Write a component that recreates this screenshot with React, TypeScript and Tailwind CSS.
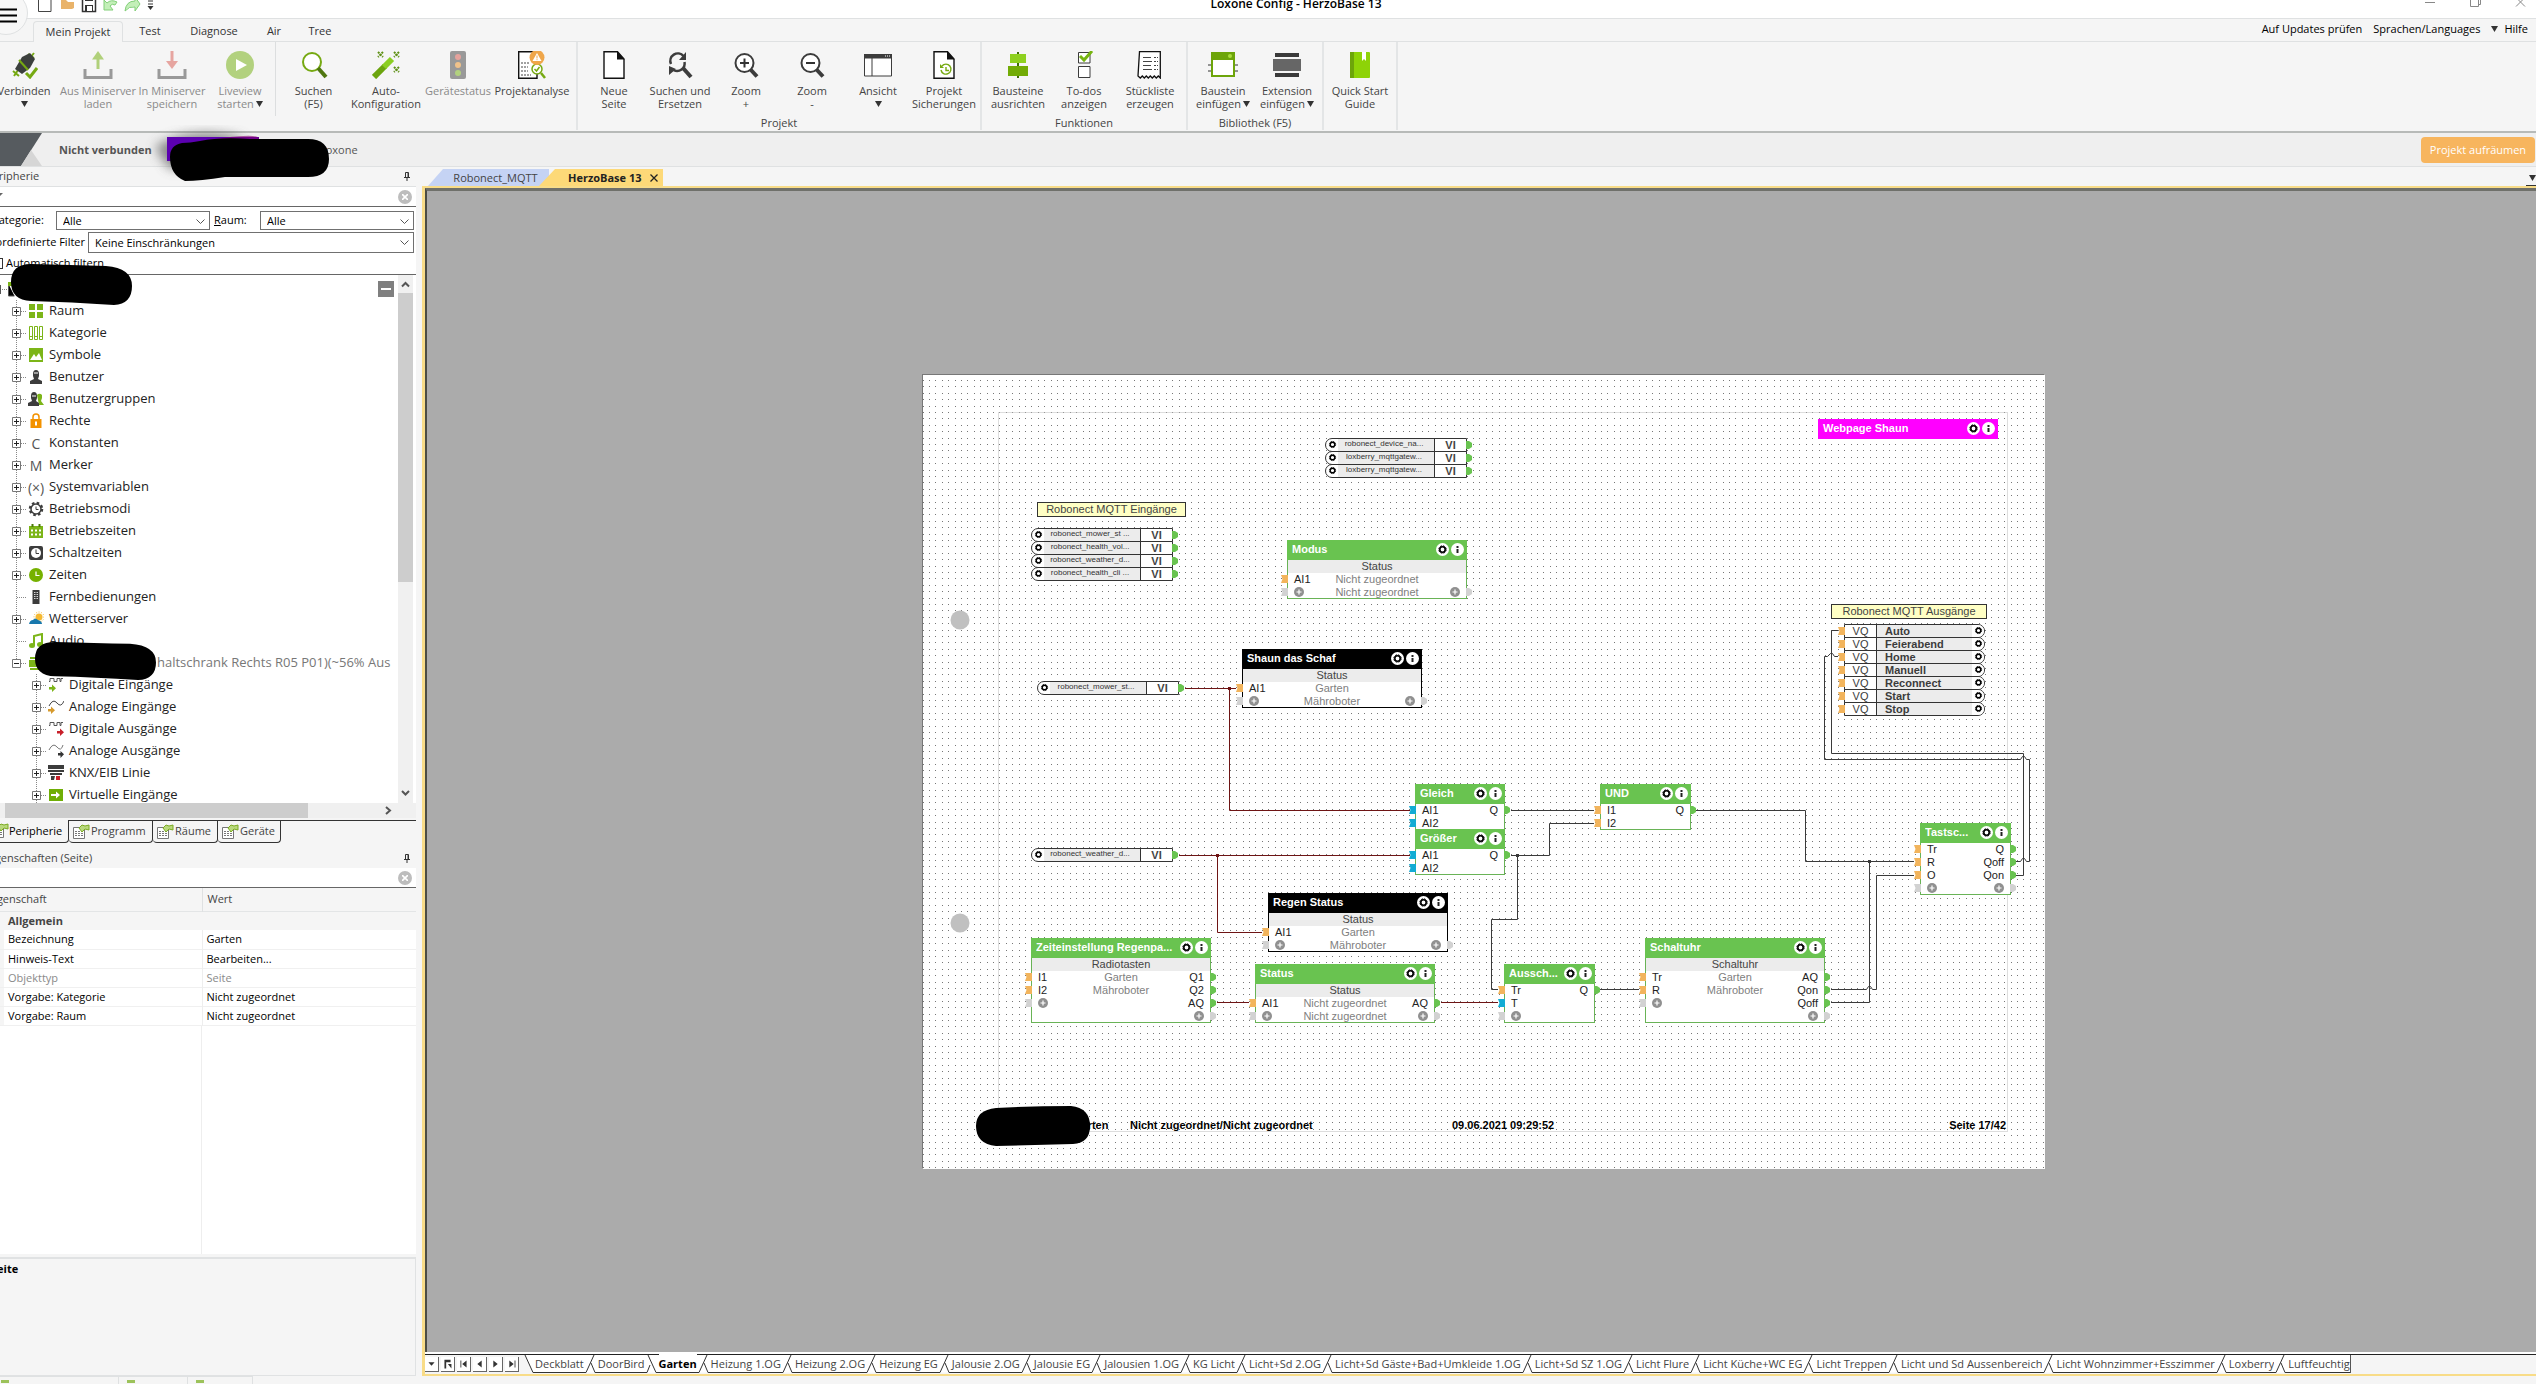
import type { ReactNode } from "react";

const GREEN = "#69c350";

/* ---------- ribbon ---------- */

type RibbonItem = { icon: ReactNode; lines: string[]; arrow?: boolean; width: string; disabled?: boolean };

const Caret = () => (
  <svg width="7" height="6" viewBox="0 0 7 6" className="inline-block shrink-0">
    <path d="M0 0H7L3.5 6Z" fill="#333" />
  </svg>
);

const DocPage = ({ children }: { children?: ReactNode }) => (
  <svg width="28" height="28" viewBox="0 0 28 28">
    <path d="M4 .7H17.500L24 8V27.300H4Z" fill="#fff" stroke="#111" strokeWidth="1.400" />
    <path d="M17 0V8.500H24.600Z" fill="#111" />
    {children}
  </svg>
);

const Lens = ({ children }: { children?: ReactNode }) => (
  <svg width="28" height="28" viewBox="0 0 28 28">
    <circle cx="12.500" cy="12" r="9" fill="#fff" stroke="#3c3c3c" strokeWidth="2" />
    <path d="M18.500 18.500L25 25.500" stroke="#3c3c3c" strokeWidth="4" />
    {children}
  </svg>
);

const icons = {
  connect: (
    <svg width="28" height="28" viewBox="0 0 28 28">
      <path d="M4 25L8 19M20 7L24 2M18 3l6 4M3 20l6 5" stroke="#76a912" strokeWidth="2" />
      <path d="M12 6l8-4 5 6-5 9-8 6-7-5z" fill="#3b3f3d" />
      <path d="M9 9l9 10" stroke="#76a912" strokeWidth="2" />
      <path d="M16 22l4 4 7-9" fill="none" stroke="#76a912" strokeWidth="3" />
    </svg>
  ),
  upload: (
    <svg width="30" height="28" viewBox="0 0 30 28">
      <path d="M2 18V26.500H28V18" fill="none" stroke="#999" strokeWidth="3" />
      <path d="M15 18V3" stroke="#b0d07a" strokeWidth="3" />
      <path d="M9 8.500L15 0L21 8.500Z" fill="#b0d07a" />
    </svg>
  ),
  download: (
    <svg width="30" height="28" viewBox="0 0 30 28">
      <path d="M2 18V26.500H28V18" fill="none" stroke="#999" strokeWidth="3" />
      <path d="M15 0V12" stroke="#e6a5a0" strokeWidth="3" />
      <path d="M9 10L15 18L21 10Z" fill="#e6a5a0" />
    </svg>
  ),
  play: (
    <svg width="28" height="28" viewBox="0 0 28 28">
      <circle cx="14" cy="14" r="14" fill="#b2d17e" />
      <path d="M10 8L21 14L10 20Z" fill="#fff" />
    </svg>
  ),
  search: (
    <svg width="28" height="28" viewBox="0 0 28 28">
      <circle cx="12" cy="11" r="9" fill="#fff" stroke="#76a912" strokeWidth="2" />
      <path d="M18 17L26 26" stroke="#4f7610" strokeWidth="4" />
    </svg>
  ),
  wand: (
    <svg width="28" height="28" viewBox="0 0 28 28">
      <path d="M2 26L13 15" stroke="#6ba40e" strokeWidth="6" />
      <path d="M12 16L20 8" stroke="#8bce22" strokeWidth="6" />
      <path d="M6 1l5 5m0-5l-5 5M22 1l5 5m0-5l-5 5M22 16l5 5m0-5l-5 5" stroke="#5d8f14" strokeWidth="2" strokeDasharray="2 1" />
    </svg>
  ),
  traffic: (
    <svg width="28" height="28" viewBox="0 0 28 28">
      <rect x="6" width="16" height="28" rx="2" fill="#999" />
      <circle cx="14" cy="6" r="3" fill="#e5a29c" />
      <circle cx="14" cy="14" r="3" fill="#f0c28a" />
      <circle cx="14" cy="22" r="3" fill="#b2d17e" />
    </svg>
  ),
  analyse: (
    <svg width="30" height="28" viewBox="0 0 30 28">
      <path d="M1.700 .7H20V27.300H1.700Z" fill="#fff" stroke="#111" strokeWidth="1.400" />
      <path d="M4 12h9M4 16h7M4 20h7M4 24h10" stroke="#444" strokeDasharray="2 1" />
      <circle cx="20" cy="18" r="5" fill="#fff" stroke="#76a912" strokeWidth="1.500" />
      <path d="M24 22l4 5" stroke="#76a912" strokeWidth="2.500" />
      <path d="M17.500 18l2 2 3-4" fill="none" stroke="#76a912" strokeWidth="1.500" />
      <circle cx="20" cy="6.500" r="7.500" fill="#efa64a" />
      <path d="M20 2l4.500 8h-9z" fill="#fff" />
      <path d="M20 4.500v3M20 8.200v1" stroke="#efa64a" />
    </svg>
  ),
  replace: (
    <svg width="28" height="28" viewBox="0 0 28 28">
      <path d="M5 13a7.500 7.500 0 0 1 12.500-8M18.500 11a7.500 7.500 0 0 1-11 8" fill="none" stroke="#3c3c3c" strokeWidth="2.500" />
      <path d="M20 1v8h-7zM3 24v-9l7 3z" fill="#3c3c3c" />
      <path d="M17 17L25 26" stroke="#3c3c3c" strokeWidth="4" />
    </svg>
  ),
  view: (
    <svg width="30" height="28" viewBox="0 0 30 28">
      <path d="M1.500 3.500H28.500V25H1.500Z" fill="#fff" stroke="#3c3c3c" />
      <path d="M1 3H29V7.500H1Z" fill="#3c3c3c" />
      <path d="M9 7V25" stroke="#3c3c3c" />
      <path d="M22 5h6" stroke="#fff" strokeDasharray="1 1" />
    </svg>
  ),
  align: (
    <svg width="28" height="28" viewBox="0 0 28 28">
      <path d="M14 1V27" stroke="#3f6a08" strokeWidth="2" />
      <rect x="6" y="3" width="16" height="9" fill="#8ed01f" />
      <rect x="4" y="15" width="20" height="10" fill="#72ab06" />
    </svg>
  ),
  todo: (
    <svg width="28" height="28" viewBox="0 0 28 28">
      <path d="M8.500 1.500H20V12H8.500ZM8.500 15.500H20V26.500H8.500Z" fill="#fff" stroke="#3c3c3c" />
      <path d="M10 5l4 4 8-9" fill="none" stroke="#76b510" strokeWidth="3" />
    </svg>
  ),
  parts: (
    <svg width="28" height="28" viewBox="0 0 28 28">
      <path d="M3.500 .7H24.300V27l-2-2-2 2-2-2-2 2-2-2-2 2-2-2-2 2-2-2-2 2-2.300-2Z" fill="#fff" stroke="#111" strokeWidth="1.300" />
      <path d="M7 6.500h8M7 10.500h9M7 14.500h8M7 18.500h9" stroke="#444" />
      <path d="M18 6.500h4M18 10.500h4M18 14.500h4M18 18.500h4" stroke="#444" strokeDasharray="2 1" />
    </svg>
  ),
  block: (
    <svg width="30" height="28" viewBox="0 0 30 28">
      <path d="M0 14h30M0 20h30" stroke="#333" />
      <rect x="3" y="1" width="24" height="25" fill="#6da50a" />
      <rect x="5" y="9" width="20" height="15" fill="#fff" />
      <circle cx="22" cy="5" r="2" fill="#a9dd3c" />
    </svg>
  ),
  extension: (
    <svg width="30" height="28" viewBox="0 0 30 28">
      <rect x="3" y="2" width="24" height="4" fill="#3a3a3a" />
      <rect x="1" y="8" width="28" height="12" fill="#666" />
      <rect x="3" y="22" width="24" height="4" fill="#3a3a3a" />
    </svg>
  ),
  guide: (
    <svg width="28" height="28" viewBox="0 0 28 28">
      <rect x="4" y="1" width="20" height="26" rx="1" fill="#8ed307" />
      <rect x="4" y="1" width="4" height="26" fill="#6da50a" />
      <path d="M16 1h4v9l-2-2-2 2z" fill="#fff" />
    </svg>
  ),
};

const groups: { label?: string; items: RibbonItem[]; className: string }[] = [
  {
    className: "-ml-[13px] pr-[7px]",
    items: [
      { icon: icons.connect, lines: ["Verbinden"], arrow: true, width: "w-[74px]" },
      { icon: icons.upload, lines: ["Aus Miniserver", "laden"], width: "w-[74px]", disabled: true },
      { icon: icons.download, lines: ["In Miniserver", "speichern"], width: "w-[74px]", disabled: true },
      { icon: icons.play, lines: ["Liveview", "starten"], arrow: true, width: "w-[62px]", disabled: true },
      { icon: icons.search, lines: ["Suchen", "(F5)"], width: "ml-1 w-[76px] border-l border-[#dcdedf]" },
      { icon: icons.wand, lines: ["Auto-", "Konfiguration"], width: "w-[70px]" },
      { icon: icons.traffic, lines: ["Gerätestatus"], width: "w-[74px]", disabled: true },
      { icon: icons.analyse, lines: ["Projektanalyse"], width: "w-[74px]" },
    ],
  },
  {
    label: "Projekt",
    className: "px-[3px]",
    items: [
      { icon: <DocPage />, lines: ["Neue", "Seite"], width: "w-[66px]" },
      { icon: icons.replace, lines: ["Suchen und", "Ersetzen"], width: "w-[66px]" },
      { icon: <Lens><path d="M8 12h9M12.500 7.500v9" stroke="#333" strokeWidth="2" /></Lens>, lines: ["Zoom", "+"], width: "w-[66px]" },
      { icon: <Lens><path d="M8 12h9" stroke="#333" strokeWidth="2" /></Lens>, lines: ["Zoom", "-"], width: "w-[66px]" },
      { icon: icons.view, lines: ["Ansicht"], arrow: true, width: "w-[66px]" },
      {
        icon: (
          <DocPage>
            <path d="M11 19a5 5 0 1 0 1-4M16 16v3.500h3" fill="none" stroke="#76a912" strokeWidth="1.400" />
            <path d="M10 13v4h4z" fill="#76a912" />
          </DocPage>
        ),
        lines: ["Projekt", "Sicherungen"],
        width: "w-[66px]",
      },
    ],
  },
  {
    label: "Funktionen",
    className: "px-[3px]",
    items: [
      { icon: icons.align, lines: ["Bausteine", "ausrichten"], width: "w-[66px]" },
      { icon: icons.todo, lines: ["To-dos", "anzeigen"], width: "w-[66px]" },
      { icon: icons.parts, lines: ["Stückliste", "erzeugen"], width: "w-[66px]" },
    ],
  },
  {
    label: "Bibliothek (F5)",
    className: "px-[3px]",
    items: [
      { icon: icons.block, lines: ["Baustein", "einfügen"], arrow: true, width: "w-[64px]" },
      { icon: icons.extension, lines: ["Extension", "einfügen"], arrow: true, width: "w-[64px]" },
    ],
  },
  {
    className: "px-[3px]",
    items: [{ icon: icons.guide, lines: ["Quick Start", "Guide"], width: "w-[66px]" }],
  },
];

function RibbonButton({ icon, lines, arrow, width, disabled }: RibbonItem) {
  const inlineArrow = arrow && lines.length === 2;
  return (
    <button type="button" disabled={disabled} className={`${width} flex shrink-0 flex-col items-center whitespace-nowrap pt-[9px] leading-[13px] ${disabled ? "text-[#8a8a8a]" : "text-[#444]"}`}>
      <span className="mb-[5px] flex h-[28px] items-center">{icon}</span>
      <span>{lines[0]}</span>
      {lines[1] && (
        <span className="flex items-center gap-[2px]">
          {lines[1]}
          {inlineArrow && <Caret />}
        </span>
      )}
      {arrow && !inlineArrow && <span className="flex h-[13px] items-center"><Caret /></span>}
    </button>
  );
}

function Ribbon() {
  return (
    <div className="flex h-[91px] shrink-0 overflow-hidden border-b-2 border-[#b7bab8] pb-px text-[11px]">
      {groups.map((g, i) => (
        <section key={i} className={`flex shrink-0 flex-col border-r-2 border-[#e3e5e6] ${g.className}`}>
          <div className="flex h-[74px]">{g.items.map((it) => <RibbonButton key={it.lines.join()} {...it} />)}</div>
          {g.label && <div className="text-center leading-[14px] text-[#444]">{g.label}</div>}
        </section>
      ))}
    </div>
  );
}

/* ---------- window head ---------- */

function TitleBar() {
  return (
    <div className="h-[19px] shrink-0 overflow-hidden border-b border-[#dfe1e2] bg-white">
      <div className="-mt-[10px] flex h-[28px] items-center justify-between">
        <svg width="160" height="28" viewBox="0 0 160 28" className="shrink-0">
          <path d="M38.500 5H47L51 9V21.500H38.500Z" fill="#fff" stroke="#444" />
          <path d="M61 10h5l2 2h6v6l-2 1H61z" fill="#e9b36a" />
          <path d="M82.500 6.500h12l1 1v14h-13z" fill="#fff" stroke="#333" strokeWidth="1.500" />
          <path d="M85 6h8v5h-8zM85 15h8v6h-8z" fill="#333" />
          <path d="M87 16h5v5h-5z" fill="#fff" />
          <path d="M104 20V10l3 3q4-4 10-1l-2 3q-3-2-5 1l3 4z" fill="#c3efb8" stroke="#82cf78" />
          <path d="M140 14l-5-7v4q-9 0-10 10 4-5 10-4v4z" fill="#c3efb8" stroke="#82cf78" />
          <path d="M148 11h5M148 14h5" stroke="#333" />
          <path d="M147.500 16h6L150.500 20z" fill="#333" />
        </svg>
        <h1 className="ml-[12px] text-[12px] font-semibold text-black">Loxone Config - HerzoBase 13</h1>
        <div className="flex w-[116px] shrink-0 items-center">
          <svg width="116" height="28" viewBox="0 0 116 28" fill="none" stroke="#888">
            <path d="M5 12.500h10M50.500 16.500v-9h8v9zM58 14.500h2.500v-8M96 7.500l9 9m0-9l-9 9" />
          </svg>
        </div>
      </div>
    </div>
  );
}

function MenuBar() {
  return (
    <nav className="flex h-[23px] shrink-0 items-end justify-between border-b border-[#dfe1e2] text-[11px] text-[#333]">
      <div className="relative z-10 -mb-px flex h-[21px] pl-[33px]">
        <button type="button" className="w-[90px] rounded-t-sm border border-b-0 border-[#dfe1e2] bg-[#f5f5f5]">Mein Projekt</button>
        <button type="button" className="w-[54px]">Test</button>
        <button type="button" className="w-[74px]">Diagnose</button>
        <button type="button" className="w-[46px]">Air</button>
        <button type="button" className="w-[46px]">Tree</button>
      </div>
      <div className="flex h-full items-center gap-[11px] pb-[2px] pr-2 text-black">
        <button type="button">Auf Updates prüfen</button>
        <button type="button">Sprachen/Languages</button>
        <button type="button" className="flex items-center gap-[6px]"><Caret />Hilfe</button>
      </div>
    </nav>
  );
}

function StatusBar() {
  return (
    <div className="relative z-10 flex h-[34px] shrink-0 items-center justify-between border-b border-[#dfe1e2] bg-[#efefef] pr-px">
      <div className="flex h-full items-center text-[#555]">
        <svg width="42" height="33" viewBox="0 0 42 33" className="shrink-0">
          <path d="M0 0H42L21 33H0Z" fill="#565b5f" />
          <path d="M31 17L42 33H21Z" fill="#d6d6d6" />
        </svg>
        <span className="ml-[17px] w-[106px] pt-[2px] text-[11px] font-bold">Nicht verbunden</span>
        <span className="w-[155px] text-[12px]">|</span>
        <span className="pt-[2px] text-[11px]">Loxone</span>
      </div>
      <svg width="210" height="64" viewBox="0 0 210 64" className="absolute left-[130px] top-[-8px]">
        <defs>
          <filter id="spray" x="-30%" y="-60%" width="160%" height="220%">
            <feGaussianBlur stdDeviation="6" />
          </filter>
        </defs>
        <path d="M25 22Q60 0 115 14L70 40L40 44Z" fill="#555" opacity=".7" filter="url(#spray)" />
        <path d="M37 12H129V36H37Z" fill="#5b00b0" />
        <path d="M60 18Q130 6 129 14V30H60Z" fill="#800070" opacity=".6" />
        <path d="M52 18Q60 18 70 16Q90 12 120 14H178Q199 14 199 34Q199 52 178 52H95Q70 56 55 56Q40 50 40 32Q40 20 52 18Z" fill="#000" />
      </svg>
      <button type="button" className="mt-px h-[26px] w-[114px] rounded-[4px] bg-[#f7b55e] text-[11px] text-white">Projekt aufräumen</button>
    </div>
  );
}

/* ---------- periphery tree ---------- */

const G = "#7cb518";
const treeIcon: Record<string, ReactNode> = {
  raum: <path d="M1 1h6v6H1zM9 1h6v6H9zM1 9h6v6H1zM9 9h6v6H9z" fill={G} />,
  kategorie: <path d="M1.500 1.500h3v13h-3zM6.500 1.500h3v13h-3zM11.500 1.500h3v13h-3zM2 11.500h2M7 11.500h2M12 11.500h2" fill="none" stroke={G} />,
  symbole: <><path d="M1 1h14v14H1z" fill={G} /><path d="M2 13l4-6 2 3 3-4 3 7z" fill="#fff" /></>,
  benutzer: <><path d="M5 5a3 4 0 0 1 6 0v2l-1 3 4 2v3H2v-3l4-2-1-3z" fill="#3c3c3c" /><path d="M6 4h4" stroke="#fff" /></>,
  gruppen: <><path d="M9 4a3 3 0 0 1 5 0v3l-1 3 3 4h-5z" fill={G} /><path d="M3 5a3 4 0 0 1 6 0v2l-1 3 3 2v3H0v-3l4-2-1-3z" fill="#3c3c3c" /><path d="M4 5h4" stroke="#fff" /></>,
  rechte: <><path d="M5 6V4a3 3 0 0 1 6 0v2" fill="none" stroke="#f39200" strokeWidth="1.500" /><path d="M2.500 6h11v9h-11z" fill="#f39200" /><path d="M8 8.500v4" stroke="#fff" strokeWidth="2" /></>,
  betriebsmodi: <><circle cx="8" cy="8" r="6" fill="#fff" stroke="#3c3c3c" strokeWidth="2.500" strokeDasharray="2.500 2.200" /><circle cx="8" cy="8" r="5" fill="#fff" stroke="#3c3c3c" strokeWidth="1.500" /><path d="M8 5.500V8.500h2.500" fill="none" stroke="#3c3c3c" /></>,
  betriebszeiten: <><path d="M1 3h14v12H1z" fill={G} /><path d="M4.500 1v3M11.500 1v3" stroke="#4b7a07" strokeWidth="2" /><path d="M3 7.500h10M3 11.500h10" stroke="#fff" strokeWidth="2" strokeDasharray="2 2" /></>,
  schaltzeiten: <><rect x="1" y="1" width="14" height="14" rx="2" fill="#3c3c3c" /><circle cx="8" cy="8" r="5" fill="#fff" /><path d="M8 4.500V8.500h3" fill="none" stroke="#3c3c3c" /></>,
  zeiten: <><circle cx="8" cy="8" r="7" fill="#76b100" /><path d="M8 4.500V8.500h3.500" fill="none" stroke="#fff" strokeWidth="1.200" /></>,
  fern: <><path d="M4.500 1h7v14h-7z" fill="#3c3c3c" /><path d="M6.500 3v8M8 3v8M9.500 3v8" stroke="#fff" strokeDasharray="1 1" strokeWidth=".8" /></>,
  wetter: <><circle cx="11" cy="6" r="3.500" fill="#f5b932" /><circle cx="11" cy="6" r="5" fill="none" stroke="#f5b932" strokeDasharray="1 1.500" /><path d="M1 13q1-4 4-4 2-3 5 0 4 1 4 4z" fill="#1878ad" /></>,
  audio: <><path d="M6 12V3l8-2v10" fill="none" stroke={G} strokeWidth="2" /><ellipse cx="4" cy="12.500" rx="3" ry="2.500" fill={G} /><ellipse cx="12" cy="11.500" rx="3" ry="2.500" fill={G} /></>,
  server: <path d="M2 2h13v2H2zM1 5h15v7H1zM2 13h13v2H2z" fill={G} />,
  digIn: <><path d="M1 4.500h1v-3h4v3h3v-3h3v3h1v-3h2" fill="none" stroke="#555" /><path d="M1 10h3V7.500l4 3.800-4 3.700v-2.500H1z" fill={G} /></>,
  anaIn: <><path d="M1 7q4-8 8-3t7-2" fill="none" stroke="#444" /><path d="M0 10h3V7.500l4 3.800-4 3.700v-2.500H0z" fill="#d69a2d" /></>,
  digOut: <><path d="M1 4.500h1v-3h4v3h3v-3h3v3h1v-3h2" fill="none" stroke="#555" /><path d="M9 10h3V7.500l4 3.800-4 3.700v-2.500H9z" fill="#c8202a" /></>,
  anaOut: <><path d="M1 7q4-8 8-3t6-2" fill="none" stroke="#777" /><path d="M10 10h2.500V8l3.500 3.300-3.500 3.700v-2.500H10z" fill="#333" /></>,
  knx: <><path d="M0 0h16v4H0zM0 5h16v2H0zM2 8h12v2H2z" fill="#3c3c3c" /><path d="M3 11h4l-1 4H3z" fill="#3c3c3c" /><path d="M8 11h4v4H8z" fill="#c8202a" /></>,
  virtIn: <><path d="M1 2h14v12H1z" fill="#6fae06" /><path d="M3 7h5V4.500L12 8l-4 3.500V9H3z" fill="#fff" /></>,
};

type Node = { label: string; icon: string; leaf?: boolean; child?: boolean };
const treeNodes: Node[] = [
  { label: "Raum", icon: "raum" },
  { label: "Kategorie", icon: "kategorie" },
  { label: "Symbole", icon: "symbole" },
  { label: "Benutzer", icon: "benutzer" },
  { label: "Benutzergruppen", icon: "gruppen" },
  { label: "Rechte", icon: "rechte" },
  { label: "Konstanten", icon: "C" },
  { label: "Merker", icon: "M" },
  { label: "Systemvariablen", icon: "(×)" },
  { label: "Betriebsmodi", icon: "betriebsmodi" },
  { label: "Betriebszeiten", icon: "betriebszeiten" },
  { label: "Schaltzeiten", icon: "schaltzeiten" },
  { label: "Zeiten", icon: "zeiten" },
  { label: "Fernbedienungen", icon: "fern", leaf: true },
  { label: "Wetterserver", icon: "wetter" },
  { label: "Audio", icon: "audio", leaf: true },
  { label: "haltschrank Rechts R05 P01)(~56% Aus", icon: "server" },
  { label: "Digitale Eingänge", icon: "digIn", child: true },
  { label: "Analoge Eingänge", icon: "anaIn", child: true },
  { label: "Digitale Ausgänge", icon: "digOut", child: true },
  { label: "Analoge Ausgänge", icon: "anaOut", child: true },
  { label: "KNX/EIB Linie", icon: "knx", child: true },
  { label: "Virtuelle Eingänge", icon: "virtIn", child: true },
];

function TreeRow({ node }: { node: Node }) {
  const open = node.icon === "server";
  return (
    <li className={`flex h-[22px] items-center whitespace-nowrap ${node.child ? "pl-[38px]" : "pl-[18px]"}`}>
      <svg width="18" height="22" viewBox="0 0 18 22" className="shrink-0">
        <path d={open ? "M6.500 0V11" : "M6.500 0V22"} stroke="#888" strokeDasharray="1 1" />
        <path d="M7 11.500H17" stroke="#888" strokeDasharray="1 1" />
        {!node.leaf && (
          <>
            <path d="M2.500 7.500h8v8h-8z" fill="#fff" stroke="#777" />
            <path d={open ? "M4 11.500h5" : "M4 11.500h5M6.500 9v5"} stroke="#222" />
          </>
        )}
      </svg>
      {treeIcon[node.icon] ? (
        <svg width="16" height="16" viewBox="0 0 16 16" className="shrink-0">{treeIcon[node.icon]}</svg>
      ) : (
        <span className="flex w-4 shrink-0 justify-center text-[14px] text-[#555]">{node.icon}</span>
      )}
      <span className={open ? "pl-[113px] text-[#777]" : "pl-[5px]"}>{node.label}</span>
    </li>
  );
}

const Blob = ({ className }: { className: string }) => (
  <svg viewBox="0 0 122 41" className={className} preserveAspectRatio="none">
    <path d="M20 0Q60 1 95 2Q121 4 121 22Q121 40 103 41Q60 38 20 37Q0 36 0 18Q0 0 20 0Z" fill="#000" />
  </svg>
);

const Pin = () => (
  <svg width="8" height="9" viewBox="0 0 8 9" className="mr-[5px]" fill="none" stroke="#333">
    <path d="M2.500 5V.5h3V5M5 1v4M1 5.500h6M4 6v3" />
  </svg>
);

const ClearButton = () => (
  <button type="button" aria-label="Filter löschen" className="mr-1 flex h-[14px] w-[14px] shrink-0 items-center justify-center rounded-full bg-[#bdbdbd]">
    <svg width="6" height="6" viewBox="0 0 6 6"><path d="M0 0L6 6M6 0L0 6" stroke="#fff" strokeWidth="1.600" /></svg>
  </button>
);

function Combo({ id, value, className }: { id: string; value: string; className: string }) {
  return (
    <div className={`relative ${className}`}>
      <select id={id} className="h-full w-full appearance-none border border-[#707070] bg-white pl-[6px] text-[11px] leading-[16px]">
        <option>{value}</option>
      </select>
      <svg width="9" height="6" viewBox="0 0 9 6" className="pointer-events-none absolute right-[5px] top-[8px]"><path d="M.5 .5L4.500 4.500L8.500 .5" fill="none" stroke="#555" /></svg>
    </div>
  );
}

const TabIcon = () => (
  <svg width="17" height="16" viewBox="0 0 17 16" className="shrink-0">
    <path d="M.5 3.500h11v11H.5z" fill="#fff" stroke="#777" />
    <path d="M2 7.500h8M2 9.500h8M2 11.500h8" stroke="#777" strokeDasharray="2 1" />
    <path d="M6 4l3-3 3 1 4-1v5l-4-1-3 3z" fill="#b9d97c" stroke="#7cab22" />
  </svg>
);

const props = [
  ["Bezeichnung", "Garten"],
  ["Hinweis-Text", "Bearbeiten..."],
  ["Objekttyp", "Seite"],
  ["Vorgabe: Kategorie", "Nicht zugeordnet"],
  ["Vorgabe: Raum", "Nicht zugeordnet"],
];

function Sidebar() {
  return (
    <aside className="-ml-2 flex w-[430px] shrink-0 flex-col pr-[6px] text-[11px]">
      <div className="flex h-[20px] shrink-0 items-center justify-between border-b border-[#dfe1e2] text-[#444]">
        <h2 className="-ml-[6px]">Peripherie</h2>
        <Pin />
      </div>
      <div className="flex h-[20px] shrink-0 items-center border-b border-[#666] bg-white">
        <svg width="12" height="10" viewBox="0 0 12 10"><path d="M1 1h10L7 5v5H5V5z" fill="#666" /></svg>
        <input aria-label="Filter" className="min-w-0 flex-1 bg-white outline-none" />
        <ClearButton />
      </div>
      <div className="flex flex-col bg-white pt-1">
        <div className="flex h-[19px] items-center pr-[2px]">
          <label htmlFor="kat" className="w-[64px]">Kategorie:</label>
          <Combo id="kat" value="Alle" className="h-[19px] flex-1" />
          <label htmlFor="raum" className="w-[50px] pl-1"><u>R</u>aum:</label>
          <Combo id="raum" value="Alle" className="h-[19px] flex-1" />
        </div>
        <div className="mt-[2px] flex h-[21px] items-center pr-[2px]">
          <label htmlFor="vor" className="flex w-[96px] justify-end whitespace-nowrap pr-[3px]">Vordefinierte Filter</label>
          <Combo id="vor" value="Keine Einschränkungen" className="h-[21px] flex-1" />
        </div>
        <label className="flex h-[22px] items-center gap-[3px] border-b border-[#666]">
          <input type="checkbox" defaultChecked className="h-[11px] w-[11px] appearance-none border border-[#333]" />
          Automatisch filtern
        </label>
      </div>
      <div className="relative flex h-[528px] shrink-0 bg-white">
        <ul className="h-full min-w-0 flex-1 overflow-hidden pt-[3px] text-[13px] text-[#222]">
          <li className="flex h-[22px] items-center justify-between pr-1">
            <svg width="30" height="22" viewBox="0 0 30 22"><path d="M8 11.500h8" stroke="#888" strokeDasharray="1 1" /><path d="M8.500 7v9M16.500 6v12h6" stroke="#555" /><path d="M16 4h6v4h-6z" fill={G} /></svg>
            <button type="button" aria-label="Zuklappen" className="flex h-4 w-4 items-center justify-center bg-[#7f7f7f]"><span className="h-[2px] w-[10px] bg-white" /></button>
          </li>
          {treeNodes.map((n) => <TreeRow key={n.label} node={n} />)}
        </ul>
        <div className="mr-[3px] flex w-[15px] flex-col items-center bg-[#f0f0f0]">
          <svg width="15" height="18" viewBox="0 0 15 18"><path d="M4 11.500L7.500 8L11 11.500" fill="none" stroke="#555" strokeWidth="2" /></svg>
          <div className="h-[289px] w-full bg-[#cdcdcd]" />
          <svg width="15" height="18" viewBox="0 0 15 18" className="mt-auto"><path d="M4 6L7.500 9.500L11 6" fill="none" stroke="#555" strokeWidth="2" /></svg>
        </div>
        <Blob className="absolute left-[19px] top-[-11px] h-[41px] w-[122px]" />
        <Blob className="absolute left-[43px] top-[367px] h-[38px] w-[122px]" />
      </div>
      <div className="flex h-[15px] shrink-0 items-center justify-between bg-[#f0f0f0] pl-[13px] pr-[24px]">
        <div className="h-full w-[303px] bg-[#cdcdcd]" />
        <svg width="8" height="9" viewBox="0 0 8 9"><path d="M2 1L6 4.500L2 8" fill="none" stroke="#555" strokeWidth="2" /></svg>
      </div>
      <div className="mt-[2px] flex h-[23px] shrink-0 border-t border-[#333] text-[#444]">
        <button type="button" className="-mt-px flex w-[77px] items-center rounded-b-[4px] border-b border-r border-[#333] bg-[#f5f5f5] text-black"><TabIcon />Peripherie</button>
        <button type="button" className="flex w-[84px] items-center gap-px rounded-b-[4px] border-b border-r border-[#333] pl-1"><TabIcon />Programm</button>
        <button type="button" className="flex w-[65px] items-center gap-px rounded-b-[4px] border-b border-r border-[#333] pl-1"><TabIcon />Räume</button>
        <button type="button" className="flex w-[63px] items-center gap-px rounded-b-[4px] border-b border-r border-[#333] pl-1"><TabIcon />Geräte</button>
      </div>
      <div className="mt-[5px] flex h-[20px] shrink-0 items-center justify-between text-[#444]">
        <h2 className="-ml-[6px]">Eigenschaften (Seite)</h2>
        <Pin />
      </div>
      <div className="flex h-[20px] shrink-0 items-center border-b border-[#666] bg-white">
        <input aria-label="Eigenschaften filtern" className="min-w-0 flex-1 bg-white outline-none" />
        <ClearButton />
      </div>
      <div className="flex min-h-0 flex-1 flex-col bg-white">
        <table className="w-full table-fixed border-collapse text-left leading-[18px] text-black">
          <thead>
            <tr className="h-[23px] border-b border-[#e3e5e6] bg-[#f5f5f5] text-[#444]">
              <th className="w-[12px] p-0" />
              <th className="w-[198px] border-r border-[#dfe1e2] p-0 font-normal"><span className="-ml-[16px]">Eigenschaft</span></th>
              <th className="p-0 pl-[5px] font-normal">Wert</th>
            </tr>
          </thead>
          <tbody>
            <tr className="h-[19px] bg-[#f5f5f5]"><td /><td colSpan={2} className="p-0 pl-1 text-[#444]"><b>Allgemein</b></td></tr>
            {props.map(([name, value]) => (
              <tr key={name} className={`h-[19px] border-b border-[#f0f0f0] ${name === "Objekttyp" ? "text-[#8a8a8a]" : ""}`}>
                <td className="bg-[#f5f5f5] p-0" />
                <td className="border-r border-[#eee] p-0 pl-1">{name}</td>
                <td className="p-0 pl-1">{value}</td>
              </tr>
            ))}
          </tbody>
        </table>
        <div className="w-[210px] flex-1 border-r border-[#eee]" />
      </div>
      <div className="mt-[3px] h-[119px] shrink-0 border-b border-r border-t-2 border-[#e0e2e3] font-bold leading-[20px]">
        <span className="-ml-px">Seite</span>
      </div>
    </aside>
  );
}

/* ---------- page canvas ---------- */

const Gear = ({ size = 13, light = true }: { size?: number; light?: boolean }) => (
  <svg width={size} height={size} viewBox="0 0 13 13" className="shrink-0">
    {light && <circle cx="6.500" cy="6.500" r="6.500" fill="#fff" />}
    <circle cx="6.500" cy="6.500" r="2.700" fill="#fff" stroke="#000" strokeWidth="1.600" />
    <circle cx="6.500" cy="6.500" r="3.700" fill="none" stroke="#000" strokeWidth="1" strokeDasharray="1.900 1" />
  </svg>
);

const Info = () => (
  <svg width="13" height="13" viewBox="0 0 13 13" className="shrink-0">
    <circle cx="6.500" cy="6.500" r="6.500" fill="#fff" />
    <path d="M6.500 3v2M6.500 6v4" stroke="#222" strokeWidth="2" />
  </svg>
);

const Plus = () => (
  <svg width="10" height="10" viewBox="0 0 10 10" className="shrink-0">
    <circle cx="5" cy="5" r="5" fill="#909090" />
    <path d="M2.500 5h5M5 2.500v5" stroke="#fff" strokeWidth="1.200" />
  </svg>
);

const InPin = ({ color }: { color: string }) => (
  <svg width="7" height="8" viewBox="0 0 7 8" className="absolute -left-[7px] top-[2px]"><path d="M0 0H7V8H0L1.500 4Z" fill={color} /></svg>
);

const OutPin = ({ color }: { color: string }) => (
  <svg width="6" height="8" viewBox="0 0 6 8" className="absolute -right-[6px] top-[2px]"><path d="M0 0H3L6 2V6L3 8H0Z" fill={color} /></svg>
);

const ORANGE = "#f2b45c";
const CYAN = "#12acd4";
const GREY = "#d2d2d2";

// i = input label, m = text in the middle, o = output label, c = colour of the input pin
type Row = { i?: string; m?: string; o?: string; c?: string };
type BlockData = { x: number; y: number; w?: number; title: string; kind?: string; tone?: "green" | "black"; rows: Row[] };

const blocks: BlockData[] = [
  { x: 364, y: 165, title: "Modus", kind: "Status", rows: [{ i: "AI1", m: "Nicht zugeordnet" }, { i: "+", m: "Nicht zugeordnet", o: "+" }] },
  { x: 319, y: 274, title: "Shaun das Schaf", kind: "Status", tone: "black", rows: [{ i: "AI1", m: "Garten" }, { i: "+", m: "Mähroboter", o: "+" }] },
  { x: 492, y: 409, w: 90, title: "Gleich", rows: [{ i: "AI1", o: "Q", c: CYAN }, { i: "AI2", c: CYAN }] },
  { x: 492, y: 454, w: 90, title: "Größer", rows: [{ i: "AI1", o: "Q", c: CYAN }, { i: "AI2", c: CYAN }] },
  { x: 677, y: 409, w: 91, title: "UND", rows: [{ i: "I1", o: "Q" }, { i: "I2" }] },
  { x: 997, y: 448, w: 91, title: "Tastsc...", rows: [{ i: "Tr", o: "Q" }, { i: "R", o: "Qoff" }, { i: "O", o: "Qon" }, { i: "+", o: "+" }] },
  { x: 345, y: 518, title: "Regen Status", kind: "Status", tone: "black", rows: [{ i: "AI1", m: "Garten" }, { i: "+", m: "Mähroboter", o: "+" }] },
  { x: 108, y: 563, title: "Zeiteinstellung Regenpa...", kind: "Radiotasten", rows: [{ i: "I1", m: "Garten", o: "Q1" }, { i: "I2", m: "Mähroboter", o: "Q2" }, { i: "+", o: "AQ" }, { o: "+" }] },
  { x: 332, y: 589, title: "Status", kind: "Status", rows: [{ i: "AI1", m: "Nicht zugeordnet", o: "AQ" }, { i: "+", m: "Nicht zugeordnet", o: "+" }] },
  { x: 581, y: 589, w: 91, title: "Aussch...", rows: [{ i: "Tr", o: "Q" }, { i: "T", c: CYAN }, { i: "+" }] },
  { x: 722, y: 563, title: "Schaltuhr", kind: "Schaltuhr", rows: [{ i: "Tr", m: "Garten", o: "AQ" }, { i: "R", m: "Mähroboter", o: "Qon" }, { i: "+", o: "Qoff" }, { o: "+" }] },
];

function Block({ x, y, w = 180, title, kind, tone = "green", rows }: BlockData) {
  const black = tone === "black";
  return (
    <article style={{ left: x, top: y, width: w }} className={`absolute border border-t-0 bg-white text-[11px] leading-[13px] ${black ? "border-black" : "border-[#69b356]"}`}>
      <header className={`-mx-px flex h-[20px] items-center gap-[2px] pl-[5px] pr-[3px] font-bold text-white ${black ? "bg-black" : "bg-[#69c350]"}`}>
        <span className="min-w-0 flex-1 overflow-hidden whitespace-nowrap">{title}</span>
        <Gear />
        <Info />
      </header>
      {kind && <div className="bg-[#ececec] text-center text-[#444]">{kind}</div>}
      <div className="-mb-px">
        {rows.map((r, n) => (
          <div key={n} className="relative grid h-[13px] grid-cols-[1fr_auto_1fr] items-center px-[6px] text-[#222]">
            {r.i && <InPin color={r.i === "+" ? GREY : r.c ?? ORANGE} />}
            <span>{r.i === "+" ? <Plus /> : r.i}</span>
            <span className="text-[#808080]">{r.m}</span>
            <span className="flex justify-end">{r.o === "+" ? <Plus /> : r.o}</span>
            {r.o && <OutPin color={r.o === "+" ? GREY : GREEN} />}
          </div>
        ))}
      </div>
    </article>
  );
}

const inputs = [
  { x: 402, y: 63, names: ["robonect_device_na...", "loxberry_mqttgatew...", "loxberry_mqttgatew..."] },
  { x: 108, y: 153, names: ["robonect_mower_st ...", "robonect_health_vol...", "robonect_weather_d...", "robonect_health_cli ..."] },
  { x: 114, y: 306, names: ["robonect_mower_st..."] },
  { x: 108, y: 473, names: ["robonect_weather_d..."] },
];

const outputs = ["Auto", "Feierabend", "Home", "Manuell", "Reconnect", "Start", "Stop"];

const dotOffsets = [0, 6, 13, 19, 26];

function Wires() {
  return (
    <svg width="1122" height="794" viewBox="0 0 1122 794" className="absolute inset-0">
      <defs>
        <pattern id="grid" x="6" y="5" width="32" height="32" patternUnits="userSpaceOnUse">
          {dotOffsets.map((a) => dotOffsets.map((b) => <rect key={`${a}-${b}`} x={a} y={b} width="1" height="1" fill="#777" />))}
        </pattern>
      </defs>
      <rect width="1122" height="794" fill="url(#grid)" />
      <path d="M75.500 37.500H1084.500V756.500H75.500Z" fill="none" stroke="#bbb" strokeDasharray="1 1" />
      <circle cx="37" cy="245" r="9.500" fill="#c0c0c0" />
      <circle cx="37" cy="548" r="9.500" fill="#c0c0c0" />
      <g fill="none" stroke="#6e1414">
        <path d="M262 313.500H313M306.500 313V435.500H487" />
        <path d="M256 480.500H487M294.500 480V557.500H339" />
        <path d="M294 627.500H326M518 627.500H575" />
      </g>
      <path d="M305 312h3v3h-3zM293 479h3v3h-3z" fill="#6e1414" />
      <g fill="none" stroke="#3a3a3a">
        <path d="M588 435.500H671M588 480.500H626.500V448.500H671M594.500 480V544.500H568.500V614.500H575" />
        <path d="M773 435.500H882.500V486.500H991M677 614.500H716" />
        <path d="M908 614.500H943.500L945.500 611.500H947.500L949.500 614.500H953.500V500.500H991M908 627.500H946.500V486" />
        <path d="M1093 486.500H1097.500L1099.500 483.500H1101.500L1103.500 486.500H1106.500V384.500H1103.500L1101.500 381.500H1099.500L1097.500 384.500H901.500V281.500H904.500L907.500 278.500H909.500L911.500 281.500H915" />
        <path d="M1093 500.500H1100.500V378.500H908.500V255.500H915" />
      </g>
      <path d="M593 479h3v3h-3zM945 485h3v3h-3z" fill="#3a3a3a" />
    </svg>
  );
}

function Page() {
  return (
    <div className="relative m-auto h-[794px] w-[1122px] shrink-0 bg-white font-['Liberation_Sans',Arial,sans-serif] shadow-[-1px_-1px_0_#777]">
      <Wires />
      {inputs.map((g) => (
        <ul key={`${g.x}-${g.y}`} style={{ left: g.x, top: g.y }} className="absolute w-[142px]">
          {g.names.map((n, k) => (
            <li key={k} className="relative -mb-px flex h-[14px] items-stretch rounded-l-full border border-[#333] bg-white">
              <span className="flex w-[12px] shrink-0 items-center justify-center"><Gear size={11} light={false} /></span>
              <span className="flex-1 whitespace-nowrap bg-[#ececec] pr-1 text-center text-[8px] leading-[10px] text-[#333]">{n}</span>
              <b className="w-[32px] border-l border-[#333] text-center text-[11px] leading-[12px] text-[#444]">VI</b>
              <OutPin color={GREEN} />
            </li>
          ))}
        </ul>
      ))}
      <ul className="absolute left-[921px] top-[249px] w-[141px]">
        {outputs.map((n) => (
          <li key={n} className="relative -mb-px flex h-[14px] items-stretch rounded-r-full border border-[#333] bg-[#ececec] text-[11px] leading-[12px] text-[#3c3c3c]">
            <InPin color={ORANGE} />
            <span className="w-[32px] border-r border-[#333] bg-white text-center">VQ</span>
            <b className="flex-1 pl-2">{n}</b>
            <span className="flex w-[12px] items-center justify-center rounded-r-full bg-white"><Gear size={11} light={false} /></span>
          </li>
        ))}
      </ul>
      <p className="absolute left-[114px] top-[127px] h-[15px] w-[149px] border border-[#333] bg-[#ffffc4] text-center text-[11px] leading-[13px] text-[#444]">Robonect MQTT Eingänge</p>
      <p className="absolute left-[908px] top-[229px] h-[15px] w-[156px] border border-[#333] bg-[#ffffc4] text-center text-[11px] leading-[13px] text-[#444]">Robonect MQTT Ausgänge</p>
      <div className="absolute left-[895px] top-[44px] flex h-[20px] w-[180px] items-center gap-[2px] bg-[#ff00ff] pl-[5px] pr-[3px] text-[11px] font-bold text-white">
        <span className="flex-1">Webpage Shaun</span>
        <Gear />
        <Info />
      </div>
      {blocks.map((b) => <Block key={`${b.x}-${b.y}`} {...b} />)}
      <footer className="absolute left-[150px] right-[39px] top-[743px] flex text-[11px] font-bold leading-[14px] text-black">
        <span className="w-[57px]">Garten</span>
        <span className="w-[322px]">Nicht zugeordnet/Nicht zugeordnet</span>
        <span className="flex-1">09.06.2021 09:29:52</span>
        <span>Seite 17/42</span>
      </footer>
      <svg width="114" height="40" viewBox="0 0 114 40" className="absolute left-[53px] top-[731px]">
        <path d="M20 2Q55 0 95 0Q114 2 114 20Q114 37 97 38L20 40Q0 38 0 20Q0 4 20 2Z" fill="#000" />
      </svg>
    </div>
  );
}

/* ---------- sheet tabs ---------- */

const sheets = [
  "Deckblatt", "DoorBird", "Garten", "Heizung 1.OG", "Heizung 2.OG", "Heizung EG", "Jalousie 2.OG", "Jalousie EG", "Jalousien 1.OG", "KG Licht",
  "Licht+Sd 2.OG", "Licht+Sd Gäste+Bad+Umkleide 1.OG", "Licht+Sd SZ 1.OG", "Licht Flure", "Licht Küche+WC EG", "Licht Treppen",
  "Licht und Sd Aussenbereich", "Licht Wohnzimmer+Esszimmer", "Loxberry", "Luftfeuchtig",
];

const navPaths = ["M3 6h7L6.500 10z", "M3 3h7v3H5v7H3zM7 8h4v5z", "M3 4h1v8H3zM10 4v8L5 8z", "M9 4v8L4 8z", "M4 4v8l5-4z", "M4 4v8l5-4zM10 4h1v8h-1z"];

function SheetTabs() {
  return (
    <div className="flex h-[22px] shrink-0 items-start border-t-2 border-white bg-[#f5f5f5]">
      <div className="flex h-full w-full items-start border-t border-[#222]">
        {navPaths.map((d, i) => (
          <button key={i} type="button" aria-label={`Navigation ${i + 1}`} className="mr-[2px] mt-[2px] h-[15px] w-[14px] shrink-0 border-b border-r border-[#666] bg-white">
            <svg width="13" height="14" viewBox="0 0 13 16"><path d={d} fill="#333" /></svg>
          </button>
        ))}
        {sheets.map((s, i) => {
          const active = s === "Garten";
          return (
            <div key={s} className="flex h-[18px] shrink-0">
              <svg width="14" height="18" viewBox="0 0 14 18" className="shrink-0">
                <path d={i ? "M0 0H14V17.500H0Z" : "M4 0L12 17.500H14V0Z"} fill="#fff" />
                <path d={i === 0 ? "M4 0L12 17.500H14" : active ? "M0 17.500H2L5 10M3 0L11 17.500H14" : "M0 17.500H2L10 0M7 8L11 17.500H14"} fill="none" stroke="#333" />
              </svg>
              <button type="button" className={`whitespace-nowrap border-b border-[#333] bg-white text-[11px] leading-[15px] ${active ? "-mt-px h-[19px] font-bold text-black" : "h-[18px] text-[#444]"}`}>{s}</button>
            </div>
          );
        })}
        <span className="h-[18px] w-px bg-[#555]" />
      </div>
    </div>
  );
}

export default function App() {
  return (
    <div className="relative flex h-screen min-h-[900px] flex-col overflow-hidden bg-[#f5f5f5] font-['Open_Sans','Noto_Sans',sans-serif]">
      <TitleBar />
      <MenuBar />
      <Ribbon />
      <StatusBar />
      <button type="button" aria-label="Menü" className="absolute -left-[16px] -top-[9px] z-20 h-[44px] w-[44px] rounded-full border border-[#dfe1e2] bg-[#f7f7f7]">
        <svg width="42" height="42" viewBox="0 0 42 42"><path d="M14 17.500H32M14 23.500H32M14 29.500H32" stroke="#000" strokeWidth="2" /></svg>
      </button>
      <div className="flex min-h-0 flex-1">
        <Sidebar />
        <main className="flex min-w-0 flex-1 flex-col">
          <div className="flex h-[19px] shrink-0 items-end justify-between pl-[6px] text-[11px]">
            <div className="flex h-[17px]">
              <button type="button" className="h-full w-[121px] bg-[#c5d3f4] pl-[14px] text-center leading-[16px] text-[#444] [clip-path:polygon(15px_0,100%_0,100%_100%,0_100%)]">Robonect_MQTT</button>
              <button type="button" className="-ml-[10px] flex h-full w-[124px] items-center justify-between bg-[#fdd978] pl-[29px] pr-[5px] font-bold leading-[16px] text-[#222] [clip-path:polygon(16px_0,100%_0,100%_100%,0_100%)]">
                HerzoBase 13
                <svg width="8" height="8" viewBox="0 0 8 8"><path d="M.5 .5l7 7m0-7l-7 7" stroke="#222" strokeWidth="1.300" /></svg>
              </button>
            </div>
            <span className="flex h-[15px] w-[10px] items-center justify-end overflow-hidden border-b border-[#333]"><Caret /></span>
          </div>
          <div className="flex min-h-0 flex-1 flex-col border-b-2 border-l-[3px] border-t-2 border-[#f8dc88]">
            <div className="flex min-h-0 flex-1 overflow-hidden border-l-2 border-t-[3px] border-[#4b4c44] border-t-[#6f706a] bg-[#ababab] pl-[5px]">
              <Page />
            </div>
            <SheetTabs />
          </div>
        </main>
      </div>
      <div className="flex h-[8px] shrink-0 overflow-hidden">
        <span className="h-full w-[119px] border-r border-t border-[#dfe1e2] pl-px pt-[3px]"><i className="block h-[3px] w-[8px] bg-[#9cc25a]" /></span>
        <span className="h-full w-[69px] border-r border-t border-[#dfe1e2] pl-[8px] pt-[3px]"><i className="block h-[3px] w-[8px] bg-[#9cc25a]" /></span>
        <span className="h-full w-[65px] border-r border-t border-[#dfe1e2] pl-[8px] pt-[3px]"><i className="block h-[3px] w-[8px] bg-[#9cc25a]" /></span>
      </div>
    </div>
  );
}
